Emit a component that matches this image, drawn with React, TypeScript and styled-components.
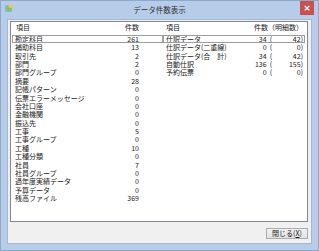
import * as React from 'react';
import styled, { createGlobalStyle } from 'styled-components';

interface MasterCount {
    name: string;
    count: number;
}

interface SlipCount {
    name: string;
    count: number;
    detail: number;
}

const masters: MasterCount[] = [
    { name: '勘定科目', count: 261 },
    { name: '補助科目', count: 13 },
    { name: '取引先', count: 2 },
    { name: '部門', count: 2 },
    { name: '部門グループ', count: 0 },
    { name: '摘要', count: 28 },
    { name: '記帳パターン', count: 0 },
    { name: '伝票エラーメッセージ', count: 0 },
    { name: '会社口座', count: 0 },
    { name: '金融機関', count: 0 },
    { name: '振込先', count: 0 },
    { name: '工事', count: 5 },
    { name: '工事グループ', count: 0 },
    { name: '工種', count: 10 },
    { name: '工種分類', count: 0 },
    { name: '社員', count: 7 },
    { name: '社員グループ', count: 0 },
    { name: '過年度実績データ', count: 0 },
    { name: '予算データ', count: 0 },
    { name: '残高ファイル', count: 369 },
];

const slips: SlipCount[] = [
    { name: '仕訳データ', count: 34, detail: 42 },
    { name: '仕訳データ(二重線)', count: 0, detail: 0 },
    { name: '仕訳データ(合　計)', count: 34, detail: 42 },
    { name: '自動仕訳', count: 136, detail: 155 },
    { name: '予約伝票', count: 0, detail: 0 },
];

const GlobalStyle = createGlobalStyle`
    html, body {
        margin: 0;
        padding: 0;
        background: #ffffff;
    }
    body {
        font-family: "Noto Sans CJK JP", "Liberation Sans", sans-serif;
    }
`;

export default function App() {
    return (
        <>
            <GlobalStyle />
            <Window>
                <TitleBar>
                    <TitleLeft>
                        <AppIcon />
                    </TitleLeft>
                    <Title>データ件数表示</Title>
                    <TitleRight>
                        <CloseButton>×</CloseButton>
                    </TitleRight>
                </TitleBar>
                <Frame>
                    <Client>
                        <ListPanel>
                            <MasterList>
                                <HeaderRow>
                                    <Name>項目</Name>
                                    <Count>件数</Count>
                                </HeaderRow>
                                {masters.map((m, i) => (
                                    <Row key={m.name} focused={i === 0}>
                                        <Name>{m.name}</Name>
                                        <Count>{m.count}</Count>
                                    </Row>
                                ))}
                            </MasterList>
                            <SlipList>
                                <SlipHeaderRow>
                                    <Name>項目</Name>
                                    <span>件数（明細数）</span>
                                </SlipHeaderRow>
                                {slips.map((s, i) => (
                                    <SlipRow key={s.name} focused={i === 0}>
                                        <Name>{s.name}</Name>
                                        <SlipCount>{s.count}</SlipCount>
                                        <Paren>(</Paren>
                                        <Detail>{s.detail}</Detail>
                                        <span>)</span>
                                    </SlipRow>
                                ))}
                            </SlipList>
                        </ListPanel>
                        <ButtonBar>
                            <PushButton>閉じる(<u>X</u>)</PushButton>
                        </ButtonBar>
                    </Client>
                </Frame>
            </Window>
        </>
    );
}

function AppIcon() {
    return (
        <svg width="10" height="10" viewBox="0 0 10 10">
            <rect x="1" y="2" width="7" height="7" rx="1" fill="#7fb8e0" />
            <path d="M2 6 L5 3 L8 6 L5 9 Z" fill="#8cc63f" />
            <circle cx="6.5" cy="3" r="2" fill="#f3c84b" />
        </svg>
    );
}

const Window = styled.div`
    width: 319px;
    height: 251px;
    box-sizing: border-box;
    border: 1px solid #8ea8c8;
    background: #b6cce8;
    display: flex;
    flex-direction: column;
    overflow: hidden;
`;

const TitleBar = styled.div`
    height: 18px;
    flex: none;
    display: grid;
    grid-template-columns: 1fr auto 1fr;
    align-items: start;
`;

const TitleLeft = styled.div`
    padding: 2px 0 0 3px;
    display: flex;
`;

const TitleRight = styled.div`
    display: flex;
    justify-content: flex-end;
    padding-right: 4px;
`;

const Title = styled.div`
    font-size: 7.5px;
    line-height: 18px;
    color: #333333;
`;

const CloseButton = styled.div`
    width: 14px;
    height: 14px;
    background: #c75050;
    color: #ffffff;
    font-family: "DejaVu Sans", sans-serif;
    font-size: 9px;
    font-weight: bold;
    line-height: 14px;
    text-align: center;
`;

const Frame = styled.div`
    flex: 1;
    display: flex;
    padding: 0 6px 6px 6px;
`;

const Client = styled.div`
    flex: 1;
    box-sizing: border-box;
    border: 1px solid #a3b8d2;
    background: #f0f0f0;
    padding: 1px 3px 4px 2px;
    display: flex;
    flex-direction: column;
`;

const ListPanel = styled.div`
    flex: 1;
    display: flex;
    background: #ffffff;
    border: 1px solid #828790;
    font-size: 7px;
    color: #1a1a1a;
`;

const MasterList = styled.div`
    width: 151px;
    padding-left: 1px;
`;

const SlipList = styled.div`
    flex: 1;
    padding-right: 2px;
`;

const HeaderRow = styled.div`
    display: flex;
    height: 12.8px;
    line-height: 11px;
    padding: 0 24px 0 4px;
`;

const SlipHeaderRow = styled(HeaderRow)`
    padding: 0 2px 0 3px;
`;

const Row = styled.div<{ focused?: boolean }>`
    display: flex;
    height: 8.4px;
    line-height: 8.4px;
    padding: 0 24px 0 3px;
    outline: 1px solid ${p => (p.focused ? '#9d9d9d' : 'transparent')};
    outline-offset: -1px;
    white-space: nowrap;
`;

const SlipRow = styled(Row)`
    padding: 0 2px 0 3px;
`;

const Name = styled.span`
    flex: 1;
`;

const Count = styled.span`
    text-align: right;
`;

const SlipCount = styled.span`
    width: 24px;
    text-align: right;
`;

const Paren = styled.span`
    width: 5px;
    padding-left: 3px;
`;

const Detail = styled.span`
    width: 26px;
    text-align: right;
`;

const ButtonBar = styled.div`
    display: flex;
    justify-content: flex-end;
    margin-top: 6px;
`;

const PushButton = styled.div`
    box-sizing: border-box;
    width: 42px;
    height: 11px;
    border: 1px solid #acacac;
    background: linear-gradient(#f2f2f2, #e3e3e3);
    font-size: 7px;
    line-height: 9px;
    text-align: center;
    color: #1a1a1a;

    u {
        text-decoration: underline;
    }
`;
